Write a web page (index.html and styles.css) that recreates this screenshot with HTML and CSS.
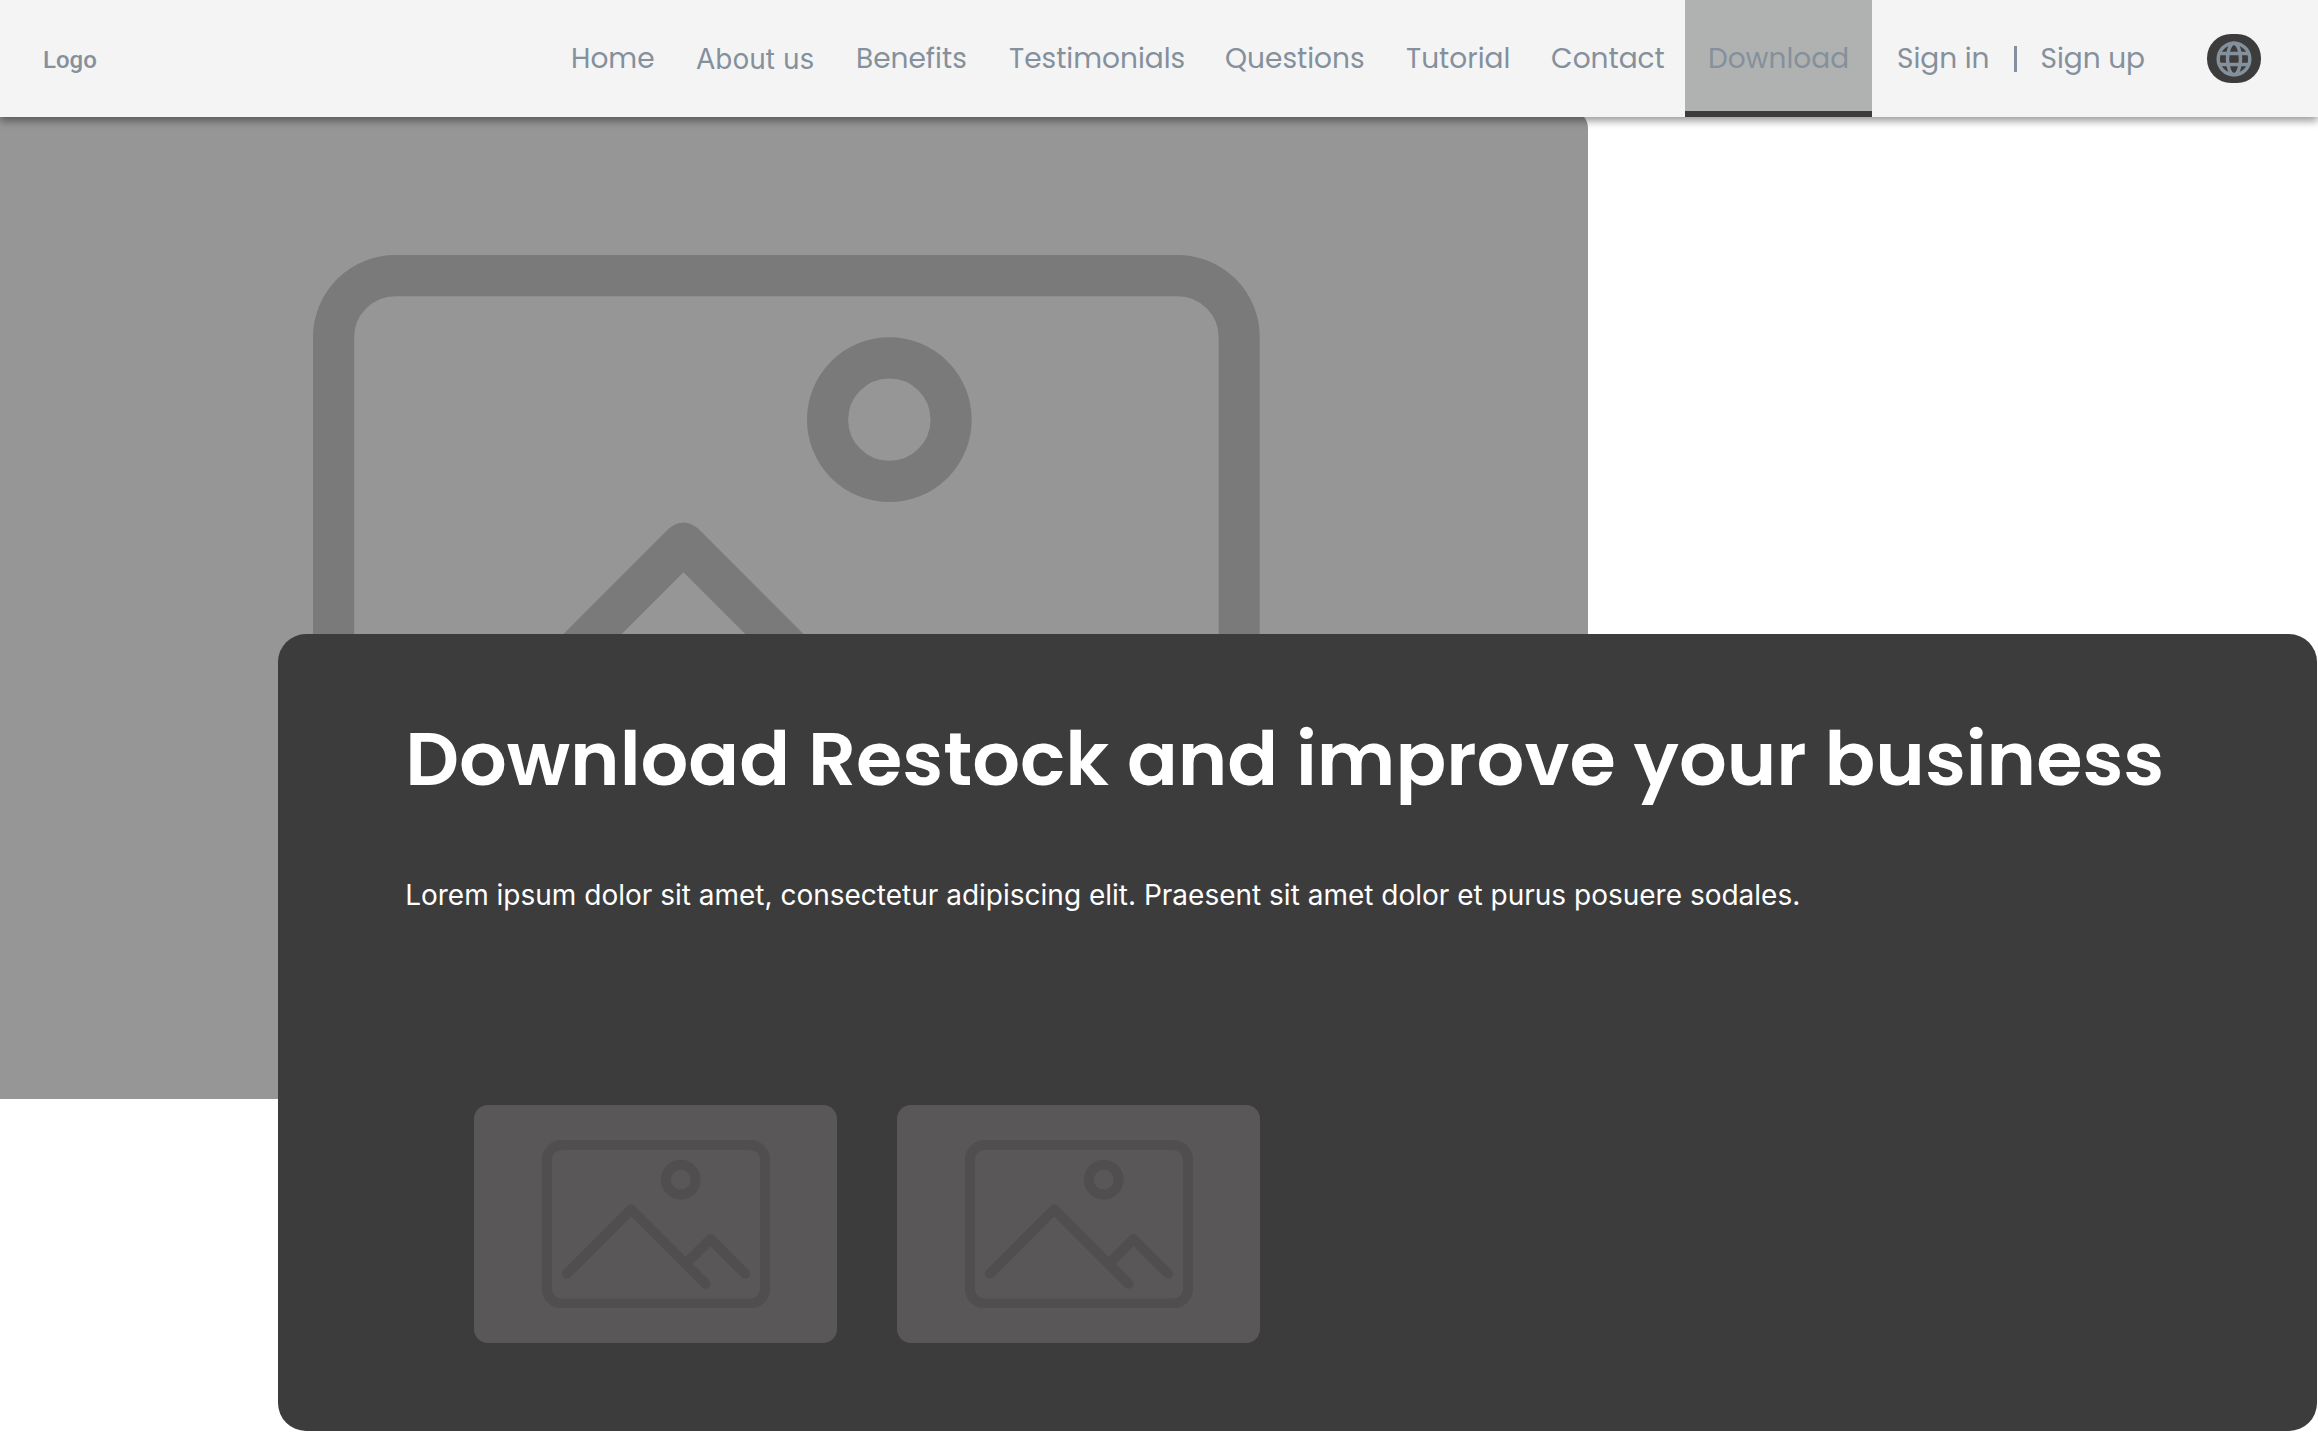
FILE: index.html
```html
<!DOCTYPE html>
<html lang="en">
<head>
<meta charset="utf-8">
<meta name="viewport" content="width=device-width, initial-scale=1">
<title>Restock - Download</title>
<link rel="stylesheet" href="styles.css">
</head>
<body>
<svg class="sprite" aria-hidden="true">
  <symbol id="picture" viewBox="0 0 46 34">
    <g fill="none" stroke="currentColor" stroke-width="2" stroke-linecap="round" stroke-linejoin="round">
      <rect x="1" y="1" width="44" height="32" rx="3"/>
      <circle cx="28" cy="8" r="3"/>
      <path d="M5 27 18 14 33 29M29 25 34 20 41 27"/>
    </g>
  </symbol>
</svg>
<header class="header">
  <a class="logo" href="#">Logo</a>
  <nav class="nav">
    <a href="#">Home</a>
    <a class="about" href="#">About us</a>
    <a href="#">Benefits</a>
    <a href="#">Testimonials</a>
    <a href="#">Questions</a>
    <a href="#">Tutorial</a>
    <a href="#">Contact</a>
    <a class="active" href="#" aria-current="page">Download</a>
  </nav>
  <div class="account">
    <a href="#">Sign in</a>
    <span class="divider"></span>
    <a href="#">Sign up</a>
  </div>
  <button class="language" type="button" aria-label="Change language">
    <svg viewBox="0 0 36 36" fill="none" stroke="currentColor" stroke-width="3.500">
      <circle cx="18" cy="18" r="15.800"/>
      <ellipse cx="18" cy="18" rx="6.500" ry="15.800"/>
      <path d="M3 12.500H33M3 23.500H33"/>
    </svg>
  </button>
</header>
<main>
  <div class="hero-image"><svg viewBox="0 0 46 34"><use href="#picture"/></svg></div>
  <section class="panel">
    <h1>Download Restock and improve your business</h1>
    <p>Lorem ipsum dolor sit amet, consectetur adipiscing elit. Praesent sit amet dolor et purus posuere sodales.</p>
    <div class="stores">
      <a class="store" href="#" aria-label="First store"><svg viewBox="0 0 46 34"><use href="#picture"/></svg></a>
      <a class="store" href="#" aria-label="Second store"><svg viewBox="0 0 46 34"><use href="#picture"/></svg></a>
    </div>
  </section>
</main>
</body>
</html>
```
FILE: styles.css
```css
* { box-sizing: border-box; }
body {
  margin: 0;
  background: #fff;
  font-family: Poppins, Inter, sans-serif;
}
a { color: inherit; text-decoration: none; }
.sprite { display: none; }

.header {
  position: relative;
  z-index: 1;
  display: flex;
  align-items: center;
  height: 117px;
  padding: 0 57px 0 43px;
  background: #f4f4f4;
  box-shadow: 0 4px 8px rgba(0, 0, 0, 0.4);
  color: #84909c;
  font-size: 28px;
  line-height: 42px;
  white-space: nowrap;
}
.logo {
  padding-top: 2px;
  font-family: Roboto, sans-serif;
  font-size: 24px;
  font-weight: 500;
  margin-right: auto;
}
.nav {
  display: grid;
  grid-template-columns: 125px 160px 153px 216px 181px 145px 134px 187px;
  align-items: center;
  align-self: stretch;
}
.about { font-family: Inter, sans-serif; }
.active {
  display: flex;
  align-items: center;
  justify-content: center;
  align-self: stretch;
  background: #b0b2b1;
  box-shadow: inset 0 -6px #3c3c3c;
}
.account {
  display: flex;
  align-items: center;
  gap: 24px;
  margin: 0 62px 0 25px;
}
.divider { width: 3px; height: 26px; background: #84909c; }
.language {
  display: flex;
  align-items: center;
  justify-content: center;
  width: 54px;
  height: 49px;
  padding: 0;
  border: 0;
  border-radius: 24px;
  background: #3c3c3c;
  color: #84909c;
}
.language svg { width: 36px; height: 36px; }

.hero-image {
  display: flex;
  align-items: center;
  justify-content: center;
  width: 68.5%;
  height: 988px;
  margin-top: -6px;
  padding-right: 15px;
  border-radius: 0 17px 17px 0;
  background: #969696;
  color: #7a7a7a;
}
.hero-image svg { width: 60.2%; }
.panel {
  position: relative;
  margin: -465px 1px 7px 12%;
  padding: 77px 127px 88px;
  border-radius: 28px;
  background: #3c3c3c;
  color: #fff;
}
h1 {
  margin: 0;
  font-size: 75px;
  font-weight: 600;
  line-height: 96px;
}
p {
  margin: 67px 0 0;
  font-family: Inter, sans-serif;
  font-size: 28px;
  line-height: 42px;
}
.stores {
  display: flex;
  gap: 60px;
  margin: 189px 0 0 69px;
}
.store {
  display: flex;
  align-items: center;
  justify-content: center;
  width: 363px;
  height: 238px;
  border-radius: 14px;
  background: #595757;
  color: #504e4e;
}
.store svg { width: 228px; }
```
